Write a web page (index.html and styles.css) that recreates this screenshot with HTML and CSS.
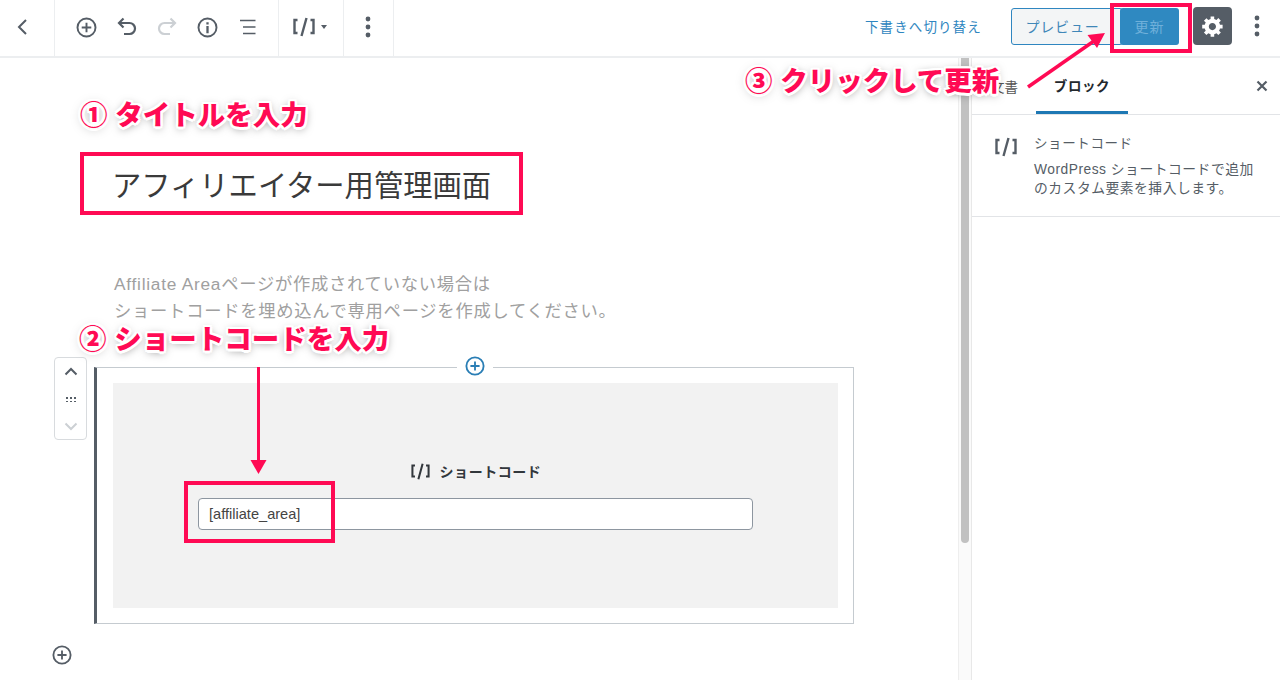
FILE: index.html
```html
<!DOCTYPE html>
<html lang="ja">

<head>
    <meta charset="UTF-8">
    <title>アフィリエイター用管理画面</title>
    <link rel="stylesheet" href="styles.css">
</head>

<body>
    <svg class="defs" width="0" height="0">
        <symbol id="plus-circle" viewBox="0 0 24 24">
            <circle cx="12" cy="12" r="9.4" fill="none" stroke="currentColor" stroke-width="2" />
            <path d="M12 7v10M7 12h10" fill="none" stroke="currentColor" stroke-width="2" />
        </symbol>
        <symbol id="shortcode" viewBox="0 0 24 20">
            <path d="M5.5 3H2.5V16H5.5M18.5 3H21.5V16H18.5M14.5 1L9.5 19" fill="none" stroke="currentColor" stroke-width="2.4" />
        </symbol>
        <symbol id="dots" viewBox="0 0 6 24">
            <circle cx="3" cy="4" r="2.4" fill="currentColor" />
            <circle cx="3" cy="12" r="2.4" fill="currentColor" />
            <circle cx="3" cy="20" r="2.4" fill="currentColor" />
        </symbol>
    </svg>

    <div class="app">
        <header class="topbar">
            <div class="toolbar">
                <button class="tool backBtn">
                    <svg width="24" height="24" viewBox="0 0 24 24"><path d="M15 5l-7 7 7 7" fill="none" stroke="currentColor" stroke-width="2" /></svg>
                </button>
                <div class="toolGroup mainTools">
                    <span class="tool"><svg width="23" height="23"><use href="#plus-circle" /></svg></span>
                    <span class="tool"><svg width="22" height="22" viewBox="0 0 22 22"><path d="M7.500 2.500L3 7l4.500 4.500M3 7h10.500a5.500 5.500 0 0 1 0 11H8" fill="none" stroke="currentColor" stroke-width="2.200" /></svg></span>
                    <span class="tool off"><svg width="22" height="22" viewBox="0 0 22 22"><path d="M14.500 2.500L19 7l-4.500 4.500M19 7H8.500a5.500 5.500 0 0 0 0 11H14" fill="none" stroke="currentColor" stroke-width="2.200" /></svg></span>
                    <span class="tool"><svg width="23" height="23" viewBox="0 0 24 24"><circle cx="12" cy="12" r="9.400" fill="none" stroke="currentColor" stroke-width="2" /><path d="M10.800 10.500h2.400V18h-2.400zM10.800 6.500h2.400v2.400h-2.400z" fill="currentColor" /></svg></span>
                    <span class="tool"><svg width="22" height="22" viewBox="0 0 22 22"><path d="M3 4.500h15.500M6 11h12.500M6 17.500h12.500" fill="none" stroke="currentColor" stroke-width="1.700" /></svg></span>
                </div>
                <div class="toolGroup typeTool">
                    <svg class="scIcon" width="24" height="20"><use href="#shortcode" /></svg>
                    <span class="caret"></span>
                </div>
                <div class="toolGroup moreTool">
                    <svg width="6" height="24"><use href="#dots" /></svg>
                </div>
            </div>
            <div class="actions">
                <a class="draftLink">下書きへ切り替え</a>
                <button class="previewBtn">プレビュー</button>
                <button class="updateBtn">更新</button>
                <button class="gearBtn">
                    <svg width="24" height="24" viewBox="0 0 20 20"><path fill="currentColor" d="M18 12h-2.180c-.17.7-.44 1.350-.81 1.930l1.540 1.540-2.100 2.100-1.540-1.540c-.58.36-1.230.63-1.910.79V19H8v-2.180c-.68-.16-1.330-.43-1.910-.79l-1.540 1.540-2.120-2.120 1.540-1.540c-.36-.58-.63-1.230-.79-1.910H1V9.030h2.170c.16-.7.44-1.350.8-1.940L2.430 5.550l2.100-2.100 1.540 1.540c.58-.37 1.240-.64 1.930-.81V2h3v2.180c.68.16 1.330.43 1.910.79l1.540-1.540 2.120 2.120-1.540 1.540c.36.59.64 1.240.8 1.940H18V12zm-8.500 1.500c1.660 0 3-1.340 3-3s-1.340-3-3-3-3 1.340-3 3 1.340 3 3 3z" /></svg>
                </button>
                <svg class="moreRight" width="6" height="24"><use href="#dots" /></svg>
            </div>
        </header>

        <div class="workspace">
            <main class="editor">
                <h1 class="postTitle">アフィリエイター用管理画面</h1>
                <p class="intro">Affiliate Areaページが作成されていない場合は<br>ショートコードを埋め込んで専用ページを作成してください。</p>

                <div class="blockRow">
                    <div class="mover">
                        <svg width="18" height="18" viewBox="0 0 18 18"><path d="M3.500 11.500L9 6l5.500 5.500" fill="none" stroke="currentColor" stroke-width="2" /></svg>
                        <span class="grip"></span>
                        <svg class="off" width="18" height="18" viewBox="0 0 18 18"><path d="M3.500 6.500L9 12l5.500-5.500" fill="none" stroke="currentColor" stroke-width="2" /></svg>
                    </div>
                    <div class="block">
                        <span class="blockInserter"><svg width="22" height="22"><use href="#plus-circle" /></svg></span>
                        <div class="placeholder">
                            <div class="placeholderLabel">
                                <svg width="21" height="17"><use href="#shortcode" /></svg>
                                <span>ショートコード</span>
                            </div>
                            <input class="codeInput" type="text" value="[affiliate_area]">
                        </div>
                    </div>
                </div>
                <span class="bottomInserter"><svg width="22" height="22"><use href="#plus-circle" /></svg></span>
            </main>

            <div class="scrollTrack"><div class="scrollThumb"></div></div>

            <aside class="sidebar">
                <div class="tabs">
                    <span class="tab">文書</span>
                    <span class="tab active">ブロック</span>
                    <svg class="closeIcon" width="14" height="14" viewBox="0 0 14 14"><path d="M2.500 2.500l9 9M11.500 2.500l-9 9" fill="none" stroke="currentColor" stroke-width="2.200" /></svg>
                </div>
                <div class="blockCard">
                    <svg class="cardIcon" width="24" height="20"><use href="#shortcode" /></svg>
                    <div>
                        <div class="cardTitle">ショートコード</div>
                        <p class="cardDesc">WordPress ショートコードで追加<br>のカスタム要素を挿入します。</p>
                    </div>
                </div>
            </aside>
        </div>

        <!-- annotations drawn over the screenshot -->
        <div class="note note1">① タイトルを入力</div>
        <div class="note note2">② ショートコードを入力</div>
        <div class="note note3">③ クリックして更新</div>
        <div class="redBox boxTitle"></div>
        <div class="redBox boxInput"></div>
        <div class="redBox boxUpdate"></div>
        <svg class="arrows" width="1280" height="680" viewBox="0 0 1280 680">
            <path d="M258.500 367V462" stroke="#ff0a54" stroke-width="3" fill="none" />
            <path d="M250.500 460h16l-8 14z" fill="#ff0a54" />
            <path d="M1028 87L1094 41" stroke="#ff0a54" stroke-width="3.500" fill="none" />
            <path d="M1105 33L1097 48 1087.500 35z" fill="#ff0a54" />
        </svg>
    </div>
</body>

</html>
```

FILE: styles.css
```css
* {
    box-sizing: border-box;
}

body {
    margin: 0;
    background: #fff;
    font-family: "Liberation Sans", "Noto Sans CJK JP", sans-serif;
    color: #32373c;
}

button {
    font-family: inherit;
}

.defs {
    position: absolute;
}

.app {
    position: relative;
    width: 1280px;
    height: 680px;
    overflow: hidden;
}

/* top bar */
.topbar {
    display: flex;
    justify-content: space-between;
    height: 58px;
    border-bottom: 2px solid #eceef0;
}

.toolbar {
    display: flex;
    color: #555d66;
}

.backBtn {
    width: 55px;
    padding: 0 8px 2px 0;
    background: none;
    border: none;
    border-right: 1px solid #eceef0;
    color: #555d66;
}

.tool {
    display: flex;
    align-items: center;
    justify-content: center;
}

.tool.off,
.mover .off {
    color: #ccd0d4;
}

.toolGroup {
    display: flex;
    align-items: center;
    padding-bottom: 2px;
    border-right: 1px solid #eceef0;
}

.mainTools {
    width: 224px;
    padding-left: 11px;
}

.mainTools .tool {
    width: 40.500px;
}

.typeTool {
    width: 65px;
    padding-left: 13px;
    gap: 5px;
}

.caret {
    border-left: 3.500px solid transparent;
    border-right: 3.500px solid transparent;
    border-top: 4.500px solid #555d66;
}

.moreTool {
    width: 50px;
    justify-content: center;
    padding-right: 1px;
}

.actions {
    display: flex;
    align-items: center;
    padding: 0 20px 4px 0;
}

.draftLink {
    width: 146px;
    font-size: 13.500px;
    letter-spacing: 1.100px;
    color: #2f86c0;
}

.previewBtn {
    width: 112px;
    height: 37px;
    padding: 0 9px 0 0;
    background: #f3f5f6;
    border: 1px solid #2f86c0;
    border-radius: 3px;
    font-size: 14px;
    letter-spacing: .8px;
    color: #3f87b8;
}

.updateBtn {
    width: 59px;
    height: 37px;
    margin-left: -3px;
    padding: 0;
    background: #2f89c1;
    border: none;
    border-radius: 3px;
    font-size: 14px;
    letter-spacing: 1px;
    color: #6fb0da;
    position: relative;
}

.gearBtn {
    display: flex;
    align-items: center;
    justify-content: center;
    width: 39px;
    height: 38px;
    margin-left: 14px;
    padding: 0;
    background: #555d66;
    border: none;
    border-radius: 4px;
    color: #fff;
}

.moreRight {
    margin-left: 22px;
    color: #555d66;
}

/* main area */
.workspace {
    display: flex;
    height: 622px;
}

.editor {
    width: 958px;
    padding: 105px 0 0 54px;
}

.postTitle {
    margin: 0 0 0 58px;
    font-size: 29.300px;
    font-weight: 400;
    line-height: 46px;
    color: #3a3a3a;
}

.intro {
    margin: 62px 0 0 60px;
    font-size: 17.300px;
    line-height: 27px;
    letter-spacing: .75px;
    color: #a0a0a0;
}

.blockRow {
    display: flex;
    margin-top: 32px;
}

.mover {
    display: flex;
    flex-direction: column;
    align-items: center;
    justify-content: space-between;
    width: 33px;
    height: 83px;
    margin-right: 7px;
    padding: 5px 0 4px;
    background: #fff;
    border: 1px solid #d8dbde;
    border-radius: 4px;
    color: #555d66;
}

.grip {
    width: 11px;
    height: 6px;
    background: radial-gradient(circle, #555d66 1px, transparent 1.200px) 0 0 / 4px 4px;
}

.block {
    position: relative;
    width: 760px;
    height: 257px;
    margin-top: 10px;
    padding: 15px 15px 15px 16px;
    border: 1px solid #c5cbd0;
    border-left: 3px solid #555d66;
}

.blockInserter {
    position: absolute;
    top: -13px;
    left: 360px;
    display: flex;
    padding: 0 7px;
    background: #fff;
    color: #2a7eb5;
}

.placeholder {
    display: flex;
    flex-direction: column;
    align-items: center;
    height: 225px;
    padding-top: 78px;
    background: #f2f2f2;
}

.placeholderLabel {
    display: flex;
    align-items: center;
    gap: 9px;
    height: 20px;
    font-size: 14px;
    font-weight: 700;
    letter-spacing: .55px;
    color: #32373c;
}

.codeInput {
    width: 555px;
    height: 32px;
    margin-top: 17px;
    padding: 0 10px;
    background: #fff;
    border: 1px solid #8d96a0;
    border-radius: 4px;
    font-family: inherit;
    font-size: 14.600px;
    color: #444;
}

.bottomInserter {
    display: block;
    margin: 20px 0 0 -3px;
    height: 22px;
    color: #555d66;
}

.scrollTrack {
    width: 14px;
    background: #fafafa;
    border-left: 1px solid #eee;
    border-right: 1px solid #e8e8e8;
}

.scrollThumb {
    width: 8px;
    height: 485px;
    margin-left: 2px;
    background: #c1c1c1;
    border-radius: 0 0 4px 4px;
}

/* sidebar */
.sidebar {
    width: 308px;
}

.tabs {
    display: flex;
    align-items: stretch;
    position: relative;
    height: 57px;
    padding-left: 1px;
    border-bottom: 1px solid #e2e4e7;
    font-size: 13.500px;
    color: #555;
}

.tab {
    display: flex;
    align-items: center;
    justify-content: center;
    width: 63px;
    height: 56px;
}

.tab.active {
    width: 92px;
    font-weight: 700;
    letter-spacing: .6px;
    color: #23282d;
    border-bottom: 3px solid #1e78b4;
}

.closeIcon {
    position: absolute;
    top: 21px;
    right: 11px;
    color: #555d66;
}

.blockCard {
    display: flex;
    gap: 16px;
    height: 102px;
    padding: 19px 16px 0 22px;
    border-bottom: 1px solid #e2e4e7;
}

.cardIcon {
    flex: none;
    margin-top: 3px;
    color: #555d66;
}

.cardTitle {
    font-size: 13.500px;
    line-height: 20px;
    letter-spacing: .6px;
    color: #555d66;
}

.cardDesc {
    margin: 6px 0 0;
    font-size: 13.800px;
    line-height: 19px;
    letter-spacing: .5px;
    white-space: nowrap;
    color: #555d66;
}

/* annotations */
.note {
    position: absolute;
    font-size: 27.500px;
    font-weight: 900;
    line-height: 34px;
    white-space: nowrap;
    color: #ff0a54;
    text-shadow: 2.500px 0 0 #fff, -2.500px 0 0 #fff, 0 2.500px 0 #fff, 0 -2.500px 0 #fff,
        2px 2px 0 #fff, -2px 2px 0 #fff, 2px -2px 0 #fff, -2px -2px 0 #fff,
        0 2px 9px rgba(0, 0, 0, .5);
}

.note1 {
    left: 80px;
    top: 99px;
}

.note2 {
    left: 79px;
    top: 323px;
}

.note3 {
    left: 745px;
    top: 65px;
}

.redBox {
    position: absolute;
    border: 4px solid #ff0a54;
}

.boxTitle {
    left: 80px;
    top: 152px;
    width: 443px;
    height: 63px;
}

.boxInput {
    left: 184px;
    top: 481px;
    width: 151px;
    height: 62px;
}

.boxUpdate {
    left: 1110px;
    top: 3px;
    width: 82px;
    height: 50px;
}

.arrows {
    position: absolute;
    left: 0;
    top: 0;
    pointer-events: none;
}
```
